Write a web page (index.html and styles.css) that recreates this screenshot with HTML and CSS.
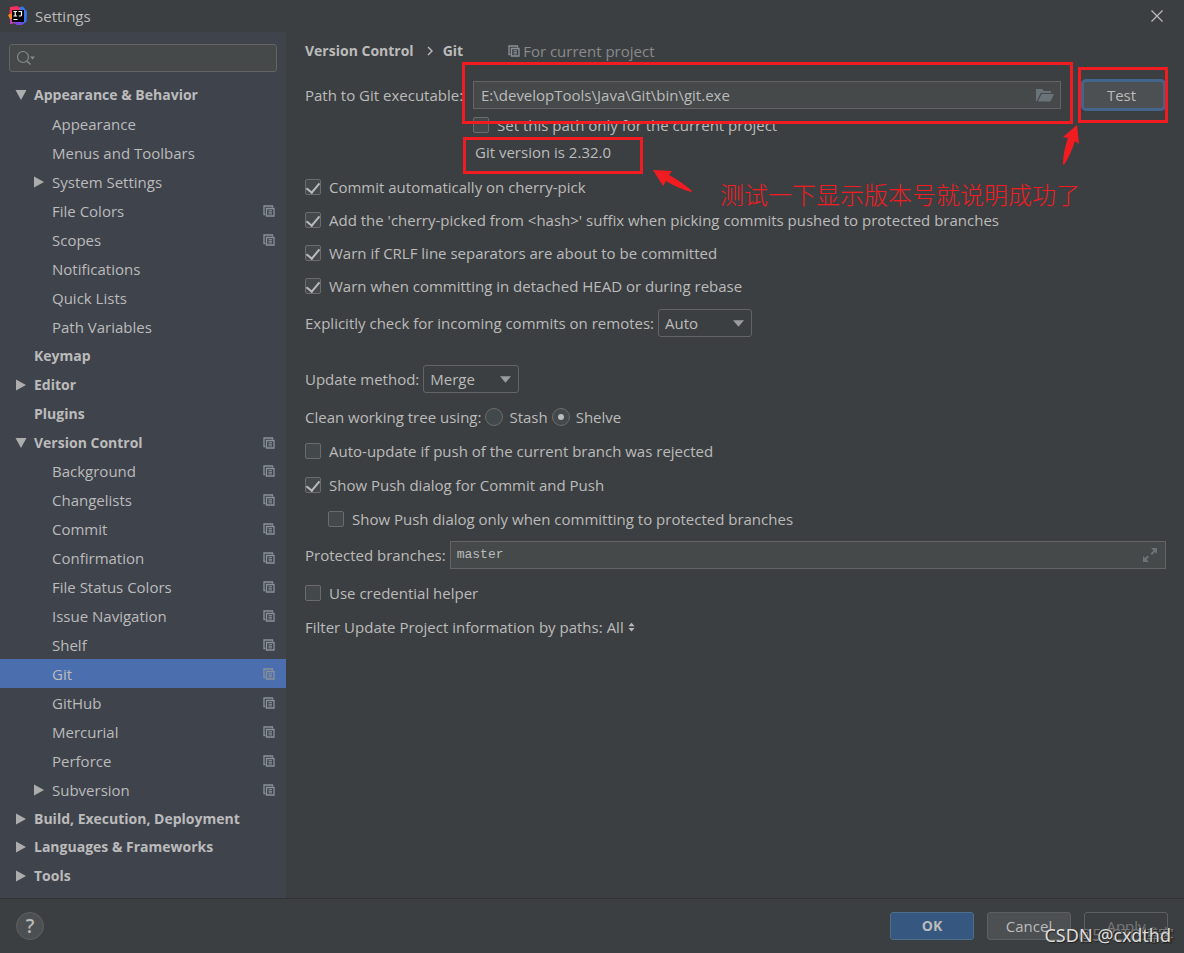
FILE: index.html
```html
<!DOCTYPE html>
<html lang="en">
<head>
<meta charset="utf-8">
<title>Settings</title>
<link rel="stylesheet" href="styles.css">
</head>
<body>
<svg class="sprite" aria-hidden="true">
  <symbol id="copy" viewBox="0 0 12 12"><path d="M2.5 9.5H1V1h8.500v1.500" fill="none" stroke="currentColor" stroke-width="1.300"/><path d="M3.500 3.500h7.500v7.500h-7.500z" fill="none" stroke="currentColor" stroke-width="1.300"/><path d="M5.500 5.700h3.500M5.500 7.300h3.500M5.500 8.900h3.500" stroke="currentColor" stroke-width="1"/></symbol>
  <symbol id="right" viewBox="0 0 12 12"><path d="M1 .5 11 6 1 11.500z" fill="currentColor"/></symbol>
  <symbol id="down" viewBox="0 0 12 12"><path d="M.5 1h11L6 11z" fill="currentColor"/></symbol>
</svg>
<div class="window">
  <header class="titlebar">
    <svg class="logo" viewBox="0 0 20 20">
      <path d="M2 1l7-1 5 3-6 8-7 1z" fill="#f5315f"/>
      <path d="M0 9l4-2 4 6-5 2z" fill="#f98a1c"/>
      <path d="M12 1l3-.5 4 5-.5 10-5 3.500-3-3z" fill="#3b73ee"/>
      <path d="M3 13l5 0 7 3-1 3H9l-3-2-4 1z" fill="#7a45e0"/>
      <path d="M2 14l3-1 2 4-5 1z" fill="#c33fb0"/>
      <path d="M4 4h12v12H4z" fill="#050505"/>
      <path d="M5.500 5.500h3.500M7.250 5.500v4.500M5.500 10h3.500M10.500 5.500h3v3.500q0 1-1.200 1h-1.600" fill="none" stroke="#fff" stroke-width="1.200"/>
      <path d="M5.500 13.500h4" stroke="#fff"/>
    </svg>
    <h1 class="title">Settings</h1>
    <button class="close" aria-label="Close"><svg viewBox="0 0 12 12"><path d="M.5.5l11 11M11.500.5l-11 11" stroke="currentColor" stroke-width="1.200"/></svg></button>
  </header>

  <div class="body">
    <aside class="sidebar">
      <div class="search">
        <svg viewBox="0 0 20 16"><circle cx="7" cy="7" r="5.500" fill="none" stroke="currentColor" stroke-width="1.200"/><path d="M11 11l3.500 3.500" stroke="currentColor" stroke-width="1.500"/><path d="M14 6.500h5L16.500 9.500z" fill="currentColor"/></svg>
        <input type="text" aria-label="Search settings">
      </div>
      <nav class="tree">
        <a class="node top" href="#"><svg class="arrow"><use href="#down"/></svg><span>Appearance &amp; Behavior</span></a>
        <a class="node" href="#"><span>Appearance</span></a>
        <a class="node" href="#"><span>Menus and Toolbars</span></a>
        <a class="node" href="#"><svg class="arrow"><use href="#right"/></svg><span>System Settings</span></a>
        <a class="node" href="#"><span>File Colors</span><svg class="copy"><use href="#copy"/></svg></a>
        <a class="node" href="#"><span>Scopes</span><svg class="copy"><use href="#copy"/></svg></a>
        <a class="node" href="#"><span>Notifications</span></a>
        <a class="node" href="#"><span>Quick Lists</span></a>
        <a class="node" href="#"><span>Path Variables</span></a>
        <a class="node top" href="#"><span>Keymap</span></a>
        <a class="node top" href="#"><svg class="arrow"><use href="#right"/></svg><span>Editor</span></a>
        <a class="node top" href="#"><span>Plugins</span></a>
        <a class="node top" href="#"><svg class="arrow"><use href="#down"/></svg><span>Version Control</span><svg class="copy"><use href="#copy"/></svg></a>
        <a class="node" href="#"><span>Background</span><svg class="copy"><use href="#copy"/></svg></a>
        <a class="node" href="#"><span>Changelists</span><svg class="copy"><use href="#copy"/></svg></a>
        <a class="node" href="#"><span>Commit</span><svg class="copy"><use href="#copy"/></svg></a>
        <a class="node" href="#"><span>Confirmation</span><svg class="copy"><use href="#copy"/></svg></a>
        <a class="node" href="#"><span>File Status Colors</span><svg class="copy"><use href="#copy"/></svg></a>
        <a class="node" href="#"><span>Issue Navigation</span><svg class="copy"><use href="#copy"/></svg></a>
        <a class="node" href="#"><span>Shelf</span><svg class="copy"><use href="#copy"/></svg></a>
        <a class="node selected" href="#" aria-current="page"><span>Git</span><svg class="copy"><use href="#copy"/></svg></a>
        <a class="node" href="#"><span>GitHub</span><svg class="copy"><use href="#copy"/></svg></a>
        <a class="node" href="#"><span>Mercurial</span><svg class="copy"><use href="#copy"/></svg></a>
        <a class="node" href="#"><span>Perforce</span><svg class="copy"><use href="#copy"/></svg></a>
        <a class="node" href="#"><svg class="arrow"><use href="#right"/></svg><span>Subversion</span><svg class="copy"><use href="#copy"/></svg></a>
        <a class="node top" href="#"><svg class="arrow"><use href="#right"/></svg><span>Build, Execution, Deployment</span></a>
        <a class="node top" href="#"><svg class="arrow"><use href="#right"/></svg><span>Languages &amp; Frameworks</span></a>
        <a class="node top" href="#"><svg class="arrow"><use href="#right"/></svg><span>Tools</span></a>
      </nav>
    </aside>

    <main class="content">
      <div class="crumbs">
        <b>Version Control</b>
        <svg class="chevron" viewBox="0 0 6 10"><path d="M1 1l4 4-4 4" fill="none" stroke="currentColor" stroke-width="1.400"/></svg>
        <b>Git</b>
        <span class="scope"><svg class="copy"><use href="#copy"/></svg>For current project</span>
      </div>

      <div class="exec">
        <label class="path-label" for="path">Path to Git executable:</label>
        <div class="field path">
          <input id="path" type="text" value="E:\developTools\Java\Git\bin\git.exe">
          <button class="browse" aria-label="Browse"><svg viewBox="0 0 18 14"><path d="M0 13V1h6l2 2h7v2H4.500L1 13z" fill="currentColor"/><path d="M5.500 6H18l-3.500 7.500H2z" fill="currentColor"/></svg></button>
          <span class="mark mark-path"></span>
        </div>
        <div class="test-cell">
          <button class="btn test">Test</button>
          <span class="mark mark-test"></span>
        </div>
        <label class="check only"><input type="checkbox"><span>Set this path only for the current project</span></label>
        <div class="version">Git version is 2.32.0<span class="mark mark-version"></span></div>
        <svg class="pointer pointer-version" viewBox="0 0 42 24"><path d="M1 1l19 1-3 4Q30 13 40 22l-1 1Q25 19 14 12l-3 5z" fill="#f01c22"/></svg>
        <svg class="pointer pointer-test" viewBox="0 0 18 42"><path d="M15 1l2 19-4-3Q9 30 2 41l-1-1Q1 28 6 14l-5-1z" fill="#f01c22"/></svg>
        <p class="note" lang="zh">测试一下显示版本号就说明成功了</p>
      </div>

      <div class="stack">
        <label class="check"><input type="checkbox" checked><span>Commit automatically on cherry-pick</span></label>
        <label class="check"><input type="checkbox" checked><span>Add the 'cherry-picked from &lt;hash&gt;' suffix when picking commits pushed to protected branches</span></label>
        <label class="check"><input type="checkbox" checked><span>Warn if CRLF line separators are about to be committed</span></label>
        <label class="check"><input type="checkbox" checked><span>Warn when committing in detached HEAD or during rebase</span></label>
        <div class="row">
          <label for="incoming">Explicitly check for incoming commits on remotes:</label>
          <div class="combo"><select id="incoming"><option>Auto</option><option>Always</option><option>Never</option></select><svg viewBox="0 0 10 6"><path d="M0 0h10L5 6z" fill="currentColor"/></svg></div>
        </div>
      </div>

      <div class="stack update">
        <div class="row">
          <label for="method">Update method:</label>
          <div class="combo merge"><select id="method"><option>Merge</option><option>Rebase</option></select><svg viewBox="0 0 10 6"><path d="M0 0h10L5 6z" fill="currentColor"/></svg></div>
        </div>
        <div class="row clean">
          <span>Clean working tree using:</span>
          <label class="check"><input type="radio" name="clean"><span>Stash</span></label>
          <label class="check"><input type="radio" name="clean" checked><span>Shelve</span></label>
        </div>
        <label class="check"><input type="checkbox"><span>Auto-update if push of the current branch was rejected</span></label>
        <label class="check"><input type="checkbox" checked><span>Show Push dialog for Commit and Push</span></label>
        <label class="check nested"><input type="checkbox"><span>Show Push dialog only when committing to protected branches</span></label>
        <div class="row">
          <label for="branches">Protected branches:</label>
          <div class="field branches">
            <input id="branches" type="text" value="master">
            <button class="expand" aria-label="Expand"><svg viewBox="0 0 16 16"><path d="M9 1h6v6l-2-2-3 3-1.500-1.500 3-3zM1 9l2 2 2.500-2.500L7 10l-2.500 2.500L7 15H1z" fill="currentColor"/></svg></button>
          </div>
        </div>
        <label class="check"><input type="checkbox"><span>Use credential helper</span></label>
        <div class="row">
          <span>Filter Update Project information by paths:</span>
          <button class="link">All<svg viewBox="0 0 8 10"><path d="M4 0l3.500 4h-7zM4 10L.5 6h7z" fill="currentColor"/></svg></button>
        </div>
      </div>
    </main>
  </div>

  <footer class="footer">
    <button class="help" aria-label="Help">?</button>
    <div class="actions">
      <button class="btn primary">OK</button>
      <button class="btn">Cancel</button>
      <button class="btn disabled" disabled>Apply</button>
    </div>
    <span class="watermark faint">@51CTO博客</span>
    <span class="watermark">CSDN @cxdthd</span>
  </footer>
</div>
</body>
</html>
```
FILE: styles.css
```css
* { box-sizing: border-box; }

body {
  margin: 0;
  background: #3c3f41;
  color: #bbbbbb;
  font: 15px/20px "Open Sans", "Noto Sans", "Noto Sans CJK SC", sans-serif;
}

button, input, select { font: inherit; color: inherit; }
button { padding: 0; border: 0; background: none; }
svg { display: block; flex: none; }
.sprite { position: absolute; width: 0; height: 0; }

.window { display: flex; flex-direction: column; min-height: 100vh; }

.titlebar { display: flex; align-items: center; height: 32px; padding: 0 21px 0 8px; }
.logo { width: 20px; height: 20px; }
.title { flex: 1; margin: 0 0 0 7px; font-size: 15px; font-weight: 400; }
.close svg { width: 12px; height: 12px; }

.body { display: flex; flex: 1; }

.sidebar {
  display: flex;
  flex: none;
  flex-direction: column;
  width: 286px;
  padding: 12px 0 7px;
  background: #3f434c;
}
.search {
  display: flex;
  align-items: center;
  height: 28px;
  margin: 0 9px 9px;
  padding-left: 6px;
  border: 1px solid #646464;
  border-radius: 3px;
  background: #45494a;
  color: #87898b;
}
.search svg { width: 20px; height: 16px; }
.search input { flex: 1; min-width: 0; border: 0; outline: 0; background: none; }

.tree { display: flex; flex: 1; flex-direction: column; }
.node {
  display: flex;
  flex: 1;
  align-items: center;
  padding: 0 11px 0 52px;
  color: inherit;
  text-decoration: none;
}
.node.top { padding-left: 34px; font-size: 14px; font-weight: 700; }
.node.selected { background: #4b6eaf; }
.arrow { width: 12px; height: 12px; margin: 0 7px 0 -19px; color: #adadad; }
.node .copy { margin-left: auto; }
.copy { width: 12px; height: 12px; color: #8a9299; }

.content { flex: 1; min-width: 0; padding: 0 18px 24px 19px; }

.crumbs { display: flex; align-items: center; height: 38px; }
.crumbs b { font-size: 14px; }
.chevron { width: 6px; height: 10px; margin: 0 10px 0 13px; }
.scope { display: flex; align-items: center; gap: 3px; margin-left: 45px; color: #888a8b; }

.exec {
  position: relative;
  display: grid;
  grid-template-columns: 154px 1fr 85px;
  column-gap: 14px;
  margin-top: 11px;
  align-items: center;
}
.path-label { z-index: 1; white-space: nowrap; }
.field {
  position: relative;
  display: flex;
  align-items: center;
  height: 28px;
  border: 1px solid #646464;
  background: #45494a;
}
.field input { flex: 1; min-width: 0; padding: 0 7px; border: 0; outline: 0; background: none; }
.path { margin-right: 6px; }
.browse { margin-right: 6px; color: #6a7378; }
.browse svg { width: 18px; height: 14px; }

.test-cell { position: relative; }
.btn {
  width: 84px;
  height: 28px;
  border: 1px solid #5e6060;
  border-radius: 3px;
  background: #4c5052;
}
.btn.test { display: block; width: 100%; height: 32px; margin: -2px 0; padding-right: 4px; border: 3px solid #43658c; border-radius: 5px; }

.only { grid-column: 2; margin-top: 6px; }
.version { position: relative; grid-column: 2; margin-top: 7px; padding-left: 2px; }

.mark { position: absolute; border: 3px solid #f01c22; pointer-events: none; }
.mark-path { inset: -20px -13px -16px -12px; }
.mark-test { inset: -14px -2px -14px -3px; }
.mark-version { top: -5px; left: -10px; width: 180px; height: 37px; }
.pointer { position: absolute; }
.pointer-version { top: 88px; left: 347px; width: 42px; height: 24px; }
.pointer-test { top: 43px; right: 86px; width: 18px; height: 42px; }
.note {
  position: absolute;
  top: 101px;
  right: 86px;
  margin: 0;
  color: #f01c22;
  font: 300 24px/24px "KaiTi", "Noto Sans CJK SC", sans-serif;
}

.stack { display: flex; flex-direction: column; gap: 13px; margin-top: 15px; }
.update { gap: 14px; margin-top: 28px; }
.row { display: flex; align-items: center; gap: 4px; }

.check { display: flex; align-items: center; gap: 8px; }
.check input {
  display: grid;
  place-items: center;
  flex: none;
  appearance: none;
  width: 16px;
  height: 16px;
  margin: 0;
  border: 1px solid #6b6b6b;
  border-radius: 2px;
  background: #43494a;
}
.check input[type="checkbox"]:checked::before {
  content: "";
  width: 6px;
  height: 11px;
  margin-bottom: 6px;
  border: solid #bbbbbb;
  border-width: 0 2px 2px 0;
  transform: rotate(40deg);
}
.clean .check { gap: 6px; }
.check input[type="radio"] { width: 18px; height: 18px; border-radius: 50%; }
.check input[type="radio"]:checked::before {
  content: "";
  width: 6px;
  height: 6px;
  border-radius: 50%;
  background: #bbbbbb;
}
.nested { margin: 0 0 -2px 23px; }

.combo { position: relative; width: 94px; color: #bbbbbb; }
.combo select {
  display: block;
  appearance: none;
  width: 100%;
  height: 28px;
  padding: 0 6px;
  border: 1px solid #646464;
  border-radius: 3px;
  background: #3c3f41;
}
.combo svg { position: absolute; top: 11px; right: 8px; width: 11px; height: 7px; color: #9a9da0; pointer-events: none; }
.merge { width: 96px; }

.branches { flex: 1; }
.branches input { padding: 0 6px; font: 13px/20px "Liberation Mono", monospace; }
.expand { margin-right: 7px; color: #6a7378; }
.expand svg { width: 16px; height: 16px; }
.link { display: flex; align-items: center; gap: 4px; }
.link svg { width: 7px; height: 10px; }

.footer {
  position: relative;
  display: flex;
  align-items: center;
  justify-content: space-between;
  height: 55px;
  padding: 0 16px;
  border-top: 1px solid #323232;
}
.help {
  width: 28px;
  height: 28px;
  border: 1px solid #5e6060;
  border-radius: 50%;
  background: #4c5052;
  font-size: 19px;
  font-weight: 600;
}
.actions { display: flex; gap: 13px; }
.primary { border-color: #4c708c; background: #365880; font-size: 14px; font-weight: 700; }
.disabled { background: none; color: #777777; }
.watermark {
  position: absolute;
  right: 13px;
  bottom: 6px;
  color: #dddddd;
  font: 18px/24px "Noto Sans", "Noto Sans CJK SC", sans-serif;
  text-shadow: 1px 1px 1px #222222;
  pointer-events: none;
}
.faint { right: 10px; color: #777777; font-size: 16px; }
```
